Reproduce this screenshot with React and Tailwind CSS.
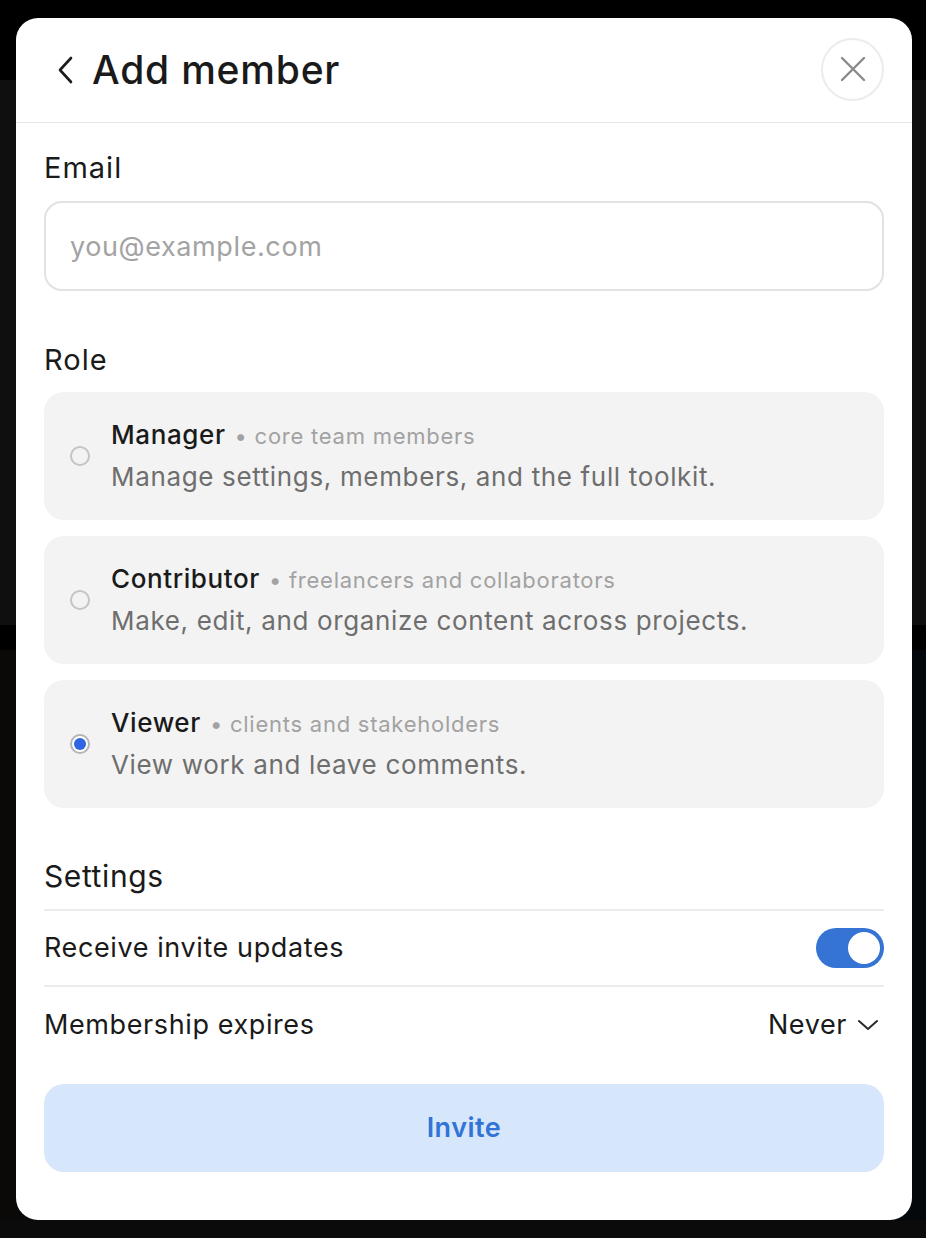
import { useState } from 'react'

const roles = [
  { id: 'manager', name: 'Manager', who: 'core team members', desc: 'Manage settings, members, and the full toolkit.' },
  { id: 'contributor', name: 'Contributor', who: 'freelancers and collaborators', desc: 'Make, edit, and organize content across projects.' },
  { id: 'viewer', name: 'Viewer', who: 'clients and stakeholders', desc: 'View work and leave comments.' },
]

function RoleCard({ role, selected, onSelect }) {
  return (
    <button
      onClick={onSelect}
      className="w-full h-[128px] rounded-[20px] bg-[#f3f3f3] flex items-center pl-[26px] pr-6 text-left"
    >
      <span
        className={
          'w-[20px] h-[20px] rounded-full border-2 flex items-center justify-center shrink-0 ' +
          (selected ? 'border-[#b5b5b5] bg-white' : 'border-[#c4c4c4] bg-transparent')
        }
      >
        {selected && <span className="w-[12px] h-[12px] rounded-full bg-[#2d66e0]" />}
      </span>
      <span className="ml-[21px] flex flex-col">
        <span className="flex items-baseline">
          <span className="text-[26px] leading-[34px] font-medium text-[#1a1a1a] tracking-[0.6px]">{role.name}</span>
          <span className="ml-[9px] text-[22px] leading-[34px] text-[#a2a2a2] tracking-[0.75px]">• {role.who}</span>
        </span>
        <span className="mt-[7px] text-[26px] leading-[34px] text-[#6e6e6e] tracking-[0.65px]">{role.desc}</span>
      </span>
    </button>
  )
}

export default function App() {
  const [role, setRole] = useState('viewer')
  const [updates, setUpdates] = useState(true)
  const [email, setEmail] = useState('')

  return (
    <div className="relative w-[926px] h-[1238px] bg-black overflow-hidden font-['Inter','Noto_Sans',sans-serif]">
      {/* dimmed page behind the dialog */}
      <div className="flex flex-col pt-[80px]">
        <div className="h-[545px] bg-[#0f0f0f]" />
        <div className="h-[25px] bg-black" />
        <div className="h-[570px] bg-gradient-to-r from-[#0b0907] via-[#070708] to-[#04070c]" />
        <div className="h-[18px] bg-[#0b0b0b]" />
      </div>

      <div className="absolute left-[16px] top-[18px] w-[896px] h-[1202px] bg-white rounded-[22px] flex flex-col">
        <header className="h-[105px] shrink-0 flex items-center justify-between pl-[40px] pr-[28px] border-b border-[#e6e6e6]">
          <div className="flex items-center">
            <svg width="22" height="30" viewBox="0 0 22 30" fill="none" stroke="#1c1c1c" strokeWidth="2.6" strokeLinecap="round" strokeLinejoin="round">
              <path d="M15 3 L4 15 L15 27" />
            </svg>
            <h1 className="ml-[14px] text-[39px] leading-[46px] font-medium text-[#1a1a1a] tracking-[0.8px]">Add member</h1>
          </div>
          <button className="w-[63px] h-[63px] rounded-full border-2 border-[#ececec] flex items-center justify-center mt-[-2px]">
            <svg width="26" height="26" viewBox="0 0 26 26" fill="none" stroke="#8a8a8a" strokeWidth="2.4" strokeLinecap="round">
              <path d="M2 2 L24 24 M24 2 L2 24" />
            </svg>
          </button>
        </header>

        <div className="flex-1 flex flex-col px-[28px] pt-[28px]">
          <label className="text-[29px] leading-[34px] text-[#1a1a1a] tracking-[1px]">Email</label>
          <input
            value={email}
            onChange={(e) => setEmail(e.target.value)}
            placeholder="you@example.com"
            className="mt-[16px] h-[90px] w-full rounded-[18px] border-2 border-[#e2e2e2] px-[24px] text-[27px] tracking-[0.6px] text-[#1a1a1a] placeholder:text-[#a3a3a3] outline-none"
          />

          <h2 className="mt-[52px] text-[29px] leading-[34px] text-[#1a1a1a] tracking-[1px]">Role</h2>
          <div className="mt-[15px] flex flex-col gap-[16px]">
            {roles.map((r) => (
              <RoleCard key={r.id} role={r} selected={role === r.id} onSelect={() => setRole(r.id)} />
            ))}
          </div>

          <h2 className="mt-[51px] text-[30px] leading-[34px] text-[#1a1a1a] tracking-[0.6px]">Settings</h2>
          <div className="mt-[16px] border-t-2 border-[#ececec]">
            <div className="h-[76px] flex items-center justify-between border-b-2 border-[#ececec]">
              <span className="text-[27px] text-[#1a1a1a] tracking-[0.6px]">Receive invite updates</span>
              <button
                onClick={() => setUpdates(!updates)}
                className={
                  'w-[68px] h-[40px] rounded-full flex items-center px-[4px] ' +
                  (updates ? 'bg-[#3574d4] justify-end' : 'bg-[#d9d9d9] justify-start')
                }
              >
                <span className="w-[32px] h-[32px] rounded-full bg-white" />
              </button>
            </div>
            <div className="h-[76px] flex items-center justify-between">
              <span className="text-[27px] text-[#1a1a1a] tracking-[0.6px]">Membership expires</span>
              <button className="flex items-center mr-[5px]">
                <span className="text-[27px] text-[#1a1a1a] tracking-[0.6px]">Never</span>
                <svg className="ml-[10px]" width="22" height="14" viewBox="0 0 22 14" fill="none" stroke="#2a2a2a" strokeWidth="2" strokeLinecap="round" strokeLinejoin="round">
                  <path d="M2 3 L11 11 L20 3" />
                </svg>
              </button>
            </div>
          </div>

          <button className="mt-[21px] h-[88px] w-full rounded-[20px] bg-[#d6e7fc] text-[27px] font-semibold tracking-[0.5px] text-[#3274d6]">
            Invite
          </button>
        </div>
      </div>
    </div>
  )
}
